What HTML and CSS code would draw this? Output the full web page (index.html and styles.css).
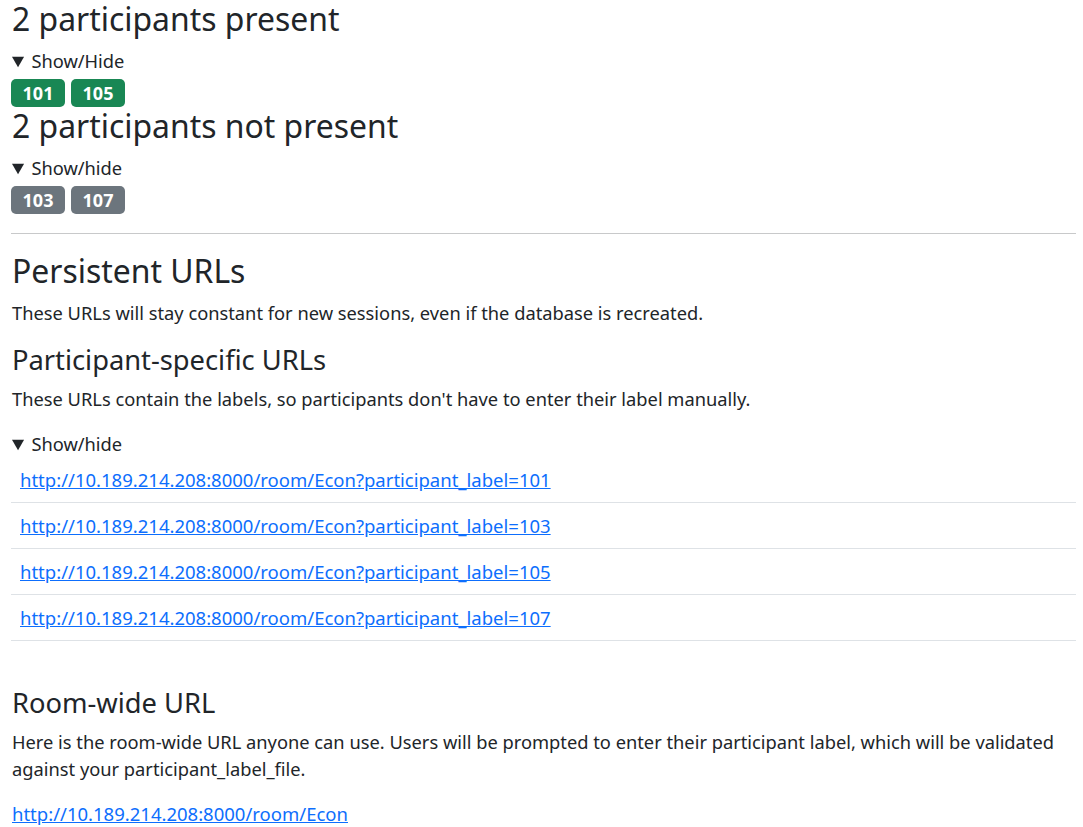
FILE: index.html
```html
<!DOCTYPE html>
<html lang="en">
<head>
<meta charset="utf-8">
<title>Room Econ</title>
<link rel="stylesheet" href="styles.css">
</head>
<body>
<div class="page">
  <h3 class="title">2 participants present</h3>
  <details open class="toggle">
    <summary>Show/Hide</summary>
    <div class="badges">
      <span class="badge badge-green">101</span>
      <span class="badge badge-green">105</span>
    </div>
  </details>

  <h3 class="title">2 participants not present</h3>
  <details open class="toggle">
    <summary>Show/hide</summary>
    <div class="badges">
      <span class="badge badge-grey">103</span>
      <span class="badge badge-grey">107</span>
    </div>
  </details>

  <hr class="rule">

  <h3 class="title">Persistent URLs</h3>
  <p class="text">These URLs will stay constant for new sessions, even if the database is recreated.</p>

  <h4 class="subtitle">Participant-specific URLs</h4>
  <p class="text">These URLs contain the labels, so participants don't have to enter their label manually.</p>

  <details open class="toggle">
    <summary>Show/hide</summary>
    <ul class="url-list">
      <li class="url-item"><a class="link" href="#">http://10.189.214.208:8000/room/Econ?participant_label=101</a></li>
      <li class="url-item"><a class="link" href="#">http://10.189.214.208:8000/room/Econ?participant_label=103</a></li>
      <li class="url-item"><a class="link" href="#">http://10.189.214.208:8000/room/Econ?participant_label=105</a></li>
      <li class="url-item"><a class="link" href="#">http://10.189.214.208:8000/room/Econ?participant_label=107</a></li>
    </ul>
  </details>

  <h4 class="subtitle">Room-wide URL</h4>
  <p class="text">Here is the room-wide URL anyone can use. Users will be prompted to enter their participant label, which will be validated against your participant_label_file.</p>
  <p class="text"><a class="link" href="#">http://10.189.214.208:8000/room/Econ</a></p>
</div>
</body>
</html>
```
FILE: styles.css
```css
html, body {
  margin: 0;
  padding: 0;
  background: #fff;
}

body {
  font-family: "Noto Sans", "Open Sans", sans-serif;
  font-size: 18.3px;
  line-height: 27px;
  color: #212529;
}

.page {
  padding: 0 7px 0 11px;
}

.title {
  margin: 0 0 9px;
  font-size: 31.9px;
  line-height: 38px;
  font-weight: 400;
  padding-left: 1px;
}

.subtitle {
  margin: 0 0 9px;
  font-size: 27.3px;
  line-height: 32px;
  font-weight: 400;
  padding-left: 1px;
}

.text {
  margin: 0 0 18px;
  padding-left: 1px;
}

.toggle summary {
  display: list-item;
  cursor: pointer;
  padding-left: 1px;
}

.badges {
  display: flex;
  gap: 6px;
  padding-top: 5px;
}

.badge {
  display: inline-flex;
  align-items: center;
  justify-content: center;
  height: 28px;
  width: 54px;
  box-sizing: border-box;
  border-radius: 5px;
  color: #fff;
  font-weight: 700;
  font-size: 18px;
  line-height: 1;
}

.badge-green {
  background: #198754;
}

.badge-grey {
  background: #6c757d;
}

.rule {
  margin: 19px 0 18px;
  border: 0;
  border-top: 1px solid #c8c9ca;
  height: 0;
}

.url-list {
  list-style: none;
  margin: 0 0 46px;
  padding: 0;
}

.url-item {
  padding: 9px 9px;
  border-bottom: 1px solid #dee2e6;
}

.link {
  color: #0d6efd;
  text-decoration: underline;
  font-size: 18.5px;
}
```
